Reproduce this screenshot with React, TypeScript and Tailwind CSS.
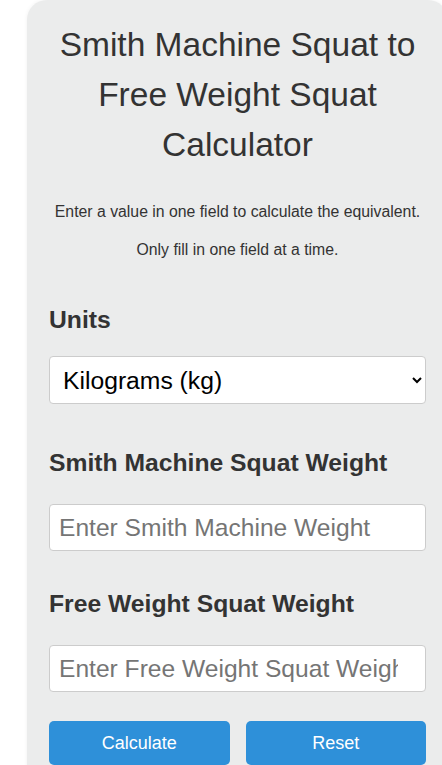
import React, { useState } from 'react';

const font = { fontFamily: '"Liberation Sans", Arial, sans-serif' };

const App: React.FC = () => {
  const [units, setUnits] = useState('kg');
  const [smith, setSmith] = useState('');
  const [free, setFree] = useState('');

  const calculate = () => {
    const s = parseFloat(smith);
    const f = parseFloat(free);
    if (!isNaN(s) && free === '') setFree((s * 0.85).toFixed(1));
    else if (!isNaN(f) && smith === '') setSmith((f / 0.85).toFixed(1));
  };

  const reset = () => {
    setSmith('');
    setFree('');
  };

  return (
    <div className="min-h-screen bg-white overflow-hidden" style={font}>
      <div className="ml-[27px] w-[421px] min-h-[765px] bg-[#ebecec] rounded-tl-[20px] rounded-tr-[20px] px-[22px] pt-[20px] pb-8 text-[#333333] shadow-[0_0_4px_rgba(0,0,0,0.06)]">
        {/* Header */}
        <h1 className="text-center text-[33.5px] leading-[50px] font-normal">
          Smith Machine Squat to Free Weight Squat Calculator
        </h1>
        <p className="mt-[30px] text-center text-[15.8px] leading-[24px]">
          Enter a value in one field to calculate the equivalent.
        </p>
        <p className="mt-[14px] text-center text-[15.8px] leading-[24px]">
          Only fill in one field at a time.
        </p>

        {/* Units */}
        <label className="block mt-[43px] text-[24.7px] leading-[29px] font-bold">Units</label>
        <select
          value={units}
          onChange={(e) => setUnits(e.target.value)}
          className="block mt-[22px] w-full h-[48px] pl-[9px] pr-[6px] bg-white border border-[#cccccc] rounded-[4px] text-[24.7px] text-black"
        >
          <option value="kg">Kilograms (kg)</option>
          <option value="lb">Pounds (lb)</option>
        </select>

        {/* Smith machine */}
        <label className="block mt-[44px] text-[24.7px] leading-[29px] font-bold">Smith Machine Squat Weight</label>
        <input
          type="text"
          inputMode="decimal"
          value={smith}
          onChange={(e) => setSmith(e.target.value)}
          placeholder="Enter Smith Machine Weight"
          className="block mt-[27px] w-full h-[47px] pl-[9px] pr-[27px] bg-white border border-[#cccccc] rounded-[4px] text-[24.6px] text-black placeholder:text-[#757575] outline-none"
        />

        {/* Free weight */}
        <label className="block mt-[38px] text-[24.7px] leading-[29px] font-bold">Free Weight Squat Weight</label>
        <input
          type="text"
          inputMode="decimal"
          value={free}
          onChange={(e) => setFree(e.target.value)}
          placeholder="Enter Free Weight Squat Weight"
          className="block mt-[27px] w-full h-[47px] pl-[9px] pr-[27px] bg-white border border-[#cccccc] rounded-[4px] text-[24.6px] text-black placeholder:text-[#757575] outline-none"
        />

        {/* Actions */}
        <div className="mt-[29px] grid grid-cols-2 gap-4">
          <button
            onClick={calculate}
            className="h-[44px] rounded-[5px] bg-[#2e90d9] text-white text-[18px]"
          >
            Calculate
          </button>
          <button
            onClick={reset}
            className="h-[44px] rounded-[5px] bg-[#2e90d9] text-white text-[18px]"
          >
            Reset
          </button>
        </div>
      </div>
    </div>
  );
};

export default App;
